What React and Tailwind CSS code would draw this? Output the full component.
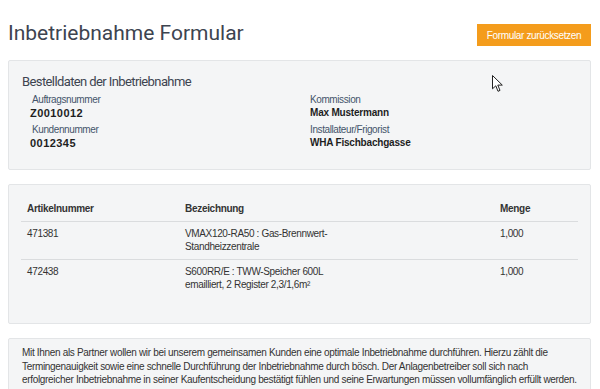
import React from "react";

const roboto = { fontFamily: "Roboto, 'Liberation Sans', sans-serif" };

function Field({ label, value, digits, shift }) {
  return (
    <div className="flex flex-col">
      <span className="text-[10px] leading-[12px] text-[#44546a] tracking-[-0.4px]">{label}</span>
      <span
        className={
          "leading-[14px] font-bold text-[#1e1e1e] " +
          (digits ? "text-[11px] tracking-[0.45px] " : "text-[10px] tracking-[-0.2px] ") +
          (shift ? "-ml-[2px]" : "")
        }
      >
        {value}
      </span>
    </div>
  );
}

export default function App() {
  return (
    <div
      className="w-[600px] h-[389px] overflow-hidden bg-white relative"
      style={{ fontFamily: "'Liberation Sans', Arial, sans-serif" }}
    >
      <div className="pl-2 pr-[9px]">
        <div className="flex items-start justify-between h-[60px]">
          <h1 className="mt-[23px] text-[21px] leading-[21px] text-[#3d4450]" style={roboto}>
            Inbetriebnahme Formular
          </h1>
          <button className="mt-[24px] bg-[#f49c1c] text-white text-[10px] tracking-[-0.35px] h-[22px] w-[114px]">
            Formular zurücksetzen
          </button>
        </div>

        <div className="border border-[#e3e5e7] bg-[#f4f5f6] rounded-[2px] h-[110px] pl-[13px] pt-[13px]">
          <div className="text-[13px] leading-[16px] tracking-[-0.6px] text-[#3d4450]" style={roboto}>
            Bestelldaten der Inbetriebnahme
          </div>
          <div className="grid grid-cols-[278px_1fr] pl-[10px] pt-[4px] gap-y-[4px]">
            <Field label="Auftragsnummer" value="Z0010012" digits shift />
            <Field label="Kommission" value="Max Mustermann" />
            <Field label="Kundennummer" value="0012345" digits shift />
            <Field label="Installateur/Frigorist" value="WHA Fischbachgasse" />
          </div>
        </div>

        <div className="mt-[14px] border border-[#e3e5e7] bg-[#f4f5f6] rounded-[2px] h-[140px] px-[12px] pt-[12px]">
          <table className="w-full text-[10px] text-[#333] tracking-[-0.35px] border-collapse">
            <thead>
              <tr className="border-b border-[#dadcde]">
                <th className="text-left font-bold tracking-[-0.3px] pl-[6px] w-[164px] h-[24px] leading-[12px] p-0">Artikelnummer</th>
                <th className="text-left font-bold tracking-[-0.3px] w-[315px] leading-[12px] p-0">Bezeichnung</th>
                <th className="text-left font-bold tracking-[-0.3px] leading-[12px] p-0">Menge</th>
              </tr>
            </thead>
            <tbody>
              <tr className="border-b border-[#dadcde] align-top">
                <td className="pl-[6px] pt-[5px] pb-[6px] leading-[13px]">471381</td>
                <td className="pt-[5px] pb-[6px] leading-[13px]">
                  VMAX120-RA50 : Gas-Brennwert-
                  <br />
                  Standheizzentrale
                </td>
                <td className="pt-[5px] pb-[6px] leading-[13px]">1,000</td>
              </tr>
              <tr className="align-top">
                <td className="pl-[6px] pt-[5px] leading-[13px]">472438</td>
                <td className="pt-[5px] leading-[13px]">
                  S600RR/E : TWW-Speicher 600L
                  <br />
                  emailliert, 2 Register 2,3/1,6m²
                </td>
                <td className="pt-[5px] leading-[13px]">1,000</td>
              </tr>
            </tbody>
          </table>
        </div>

        <div className="mt-[14px] border border-[#e3e5e7] bg-[#f4f5f6] rounded-[2px] h-[80px] px-[13px] pt-[7px] text-[10px] leading-[13.5px] tracking-[-0.32px] text-[#333] whitespace-nowrap">
          Mit Ihnen als Partner wollen wir bei unserem gemeinsamen Kunden eine optimale Inbetriebnahme durchführen. Hierzu zählt die
          <br />
          Termingenauigkeit sowie eine schnelle Durchführung der Inbetriebnahme durch bösch. Der Anlagenbetreiber soll sich nach
          <br />
          erfolgreicher Inbetriebnahme in seiner Kaufentscheidung bestätigt fühlen und seine Erwartungen müssen vollumfänglich erfüllt werden.
        </div>
      </div>

      <svg className="absolute left-[492px] top-[75px]" width="12" height="18" viewBox="0 0 12 18">
        <path
          d="M0.5 0.5 L0.5 13.8 L3.8 10.8 L6 16.3 L8 15.4 L5.8 10.1 L10.3 10.1 Z"
          fill="white"
          stroke="#222"
          strokeWidth="1"
          strokeLinejoin="round"
        />
      </svg>
    </div>
  );
}
